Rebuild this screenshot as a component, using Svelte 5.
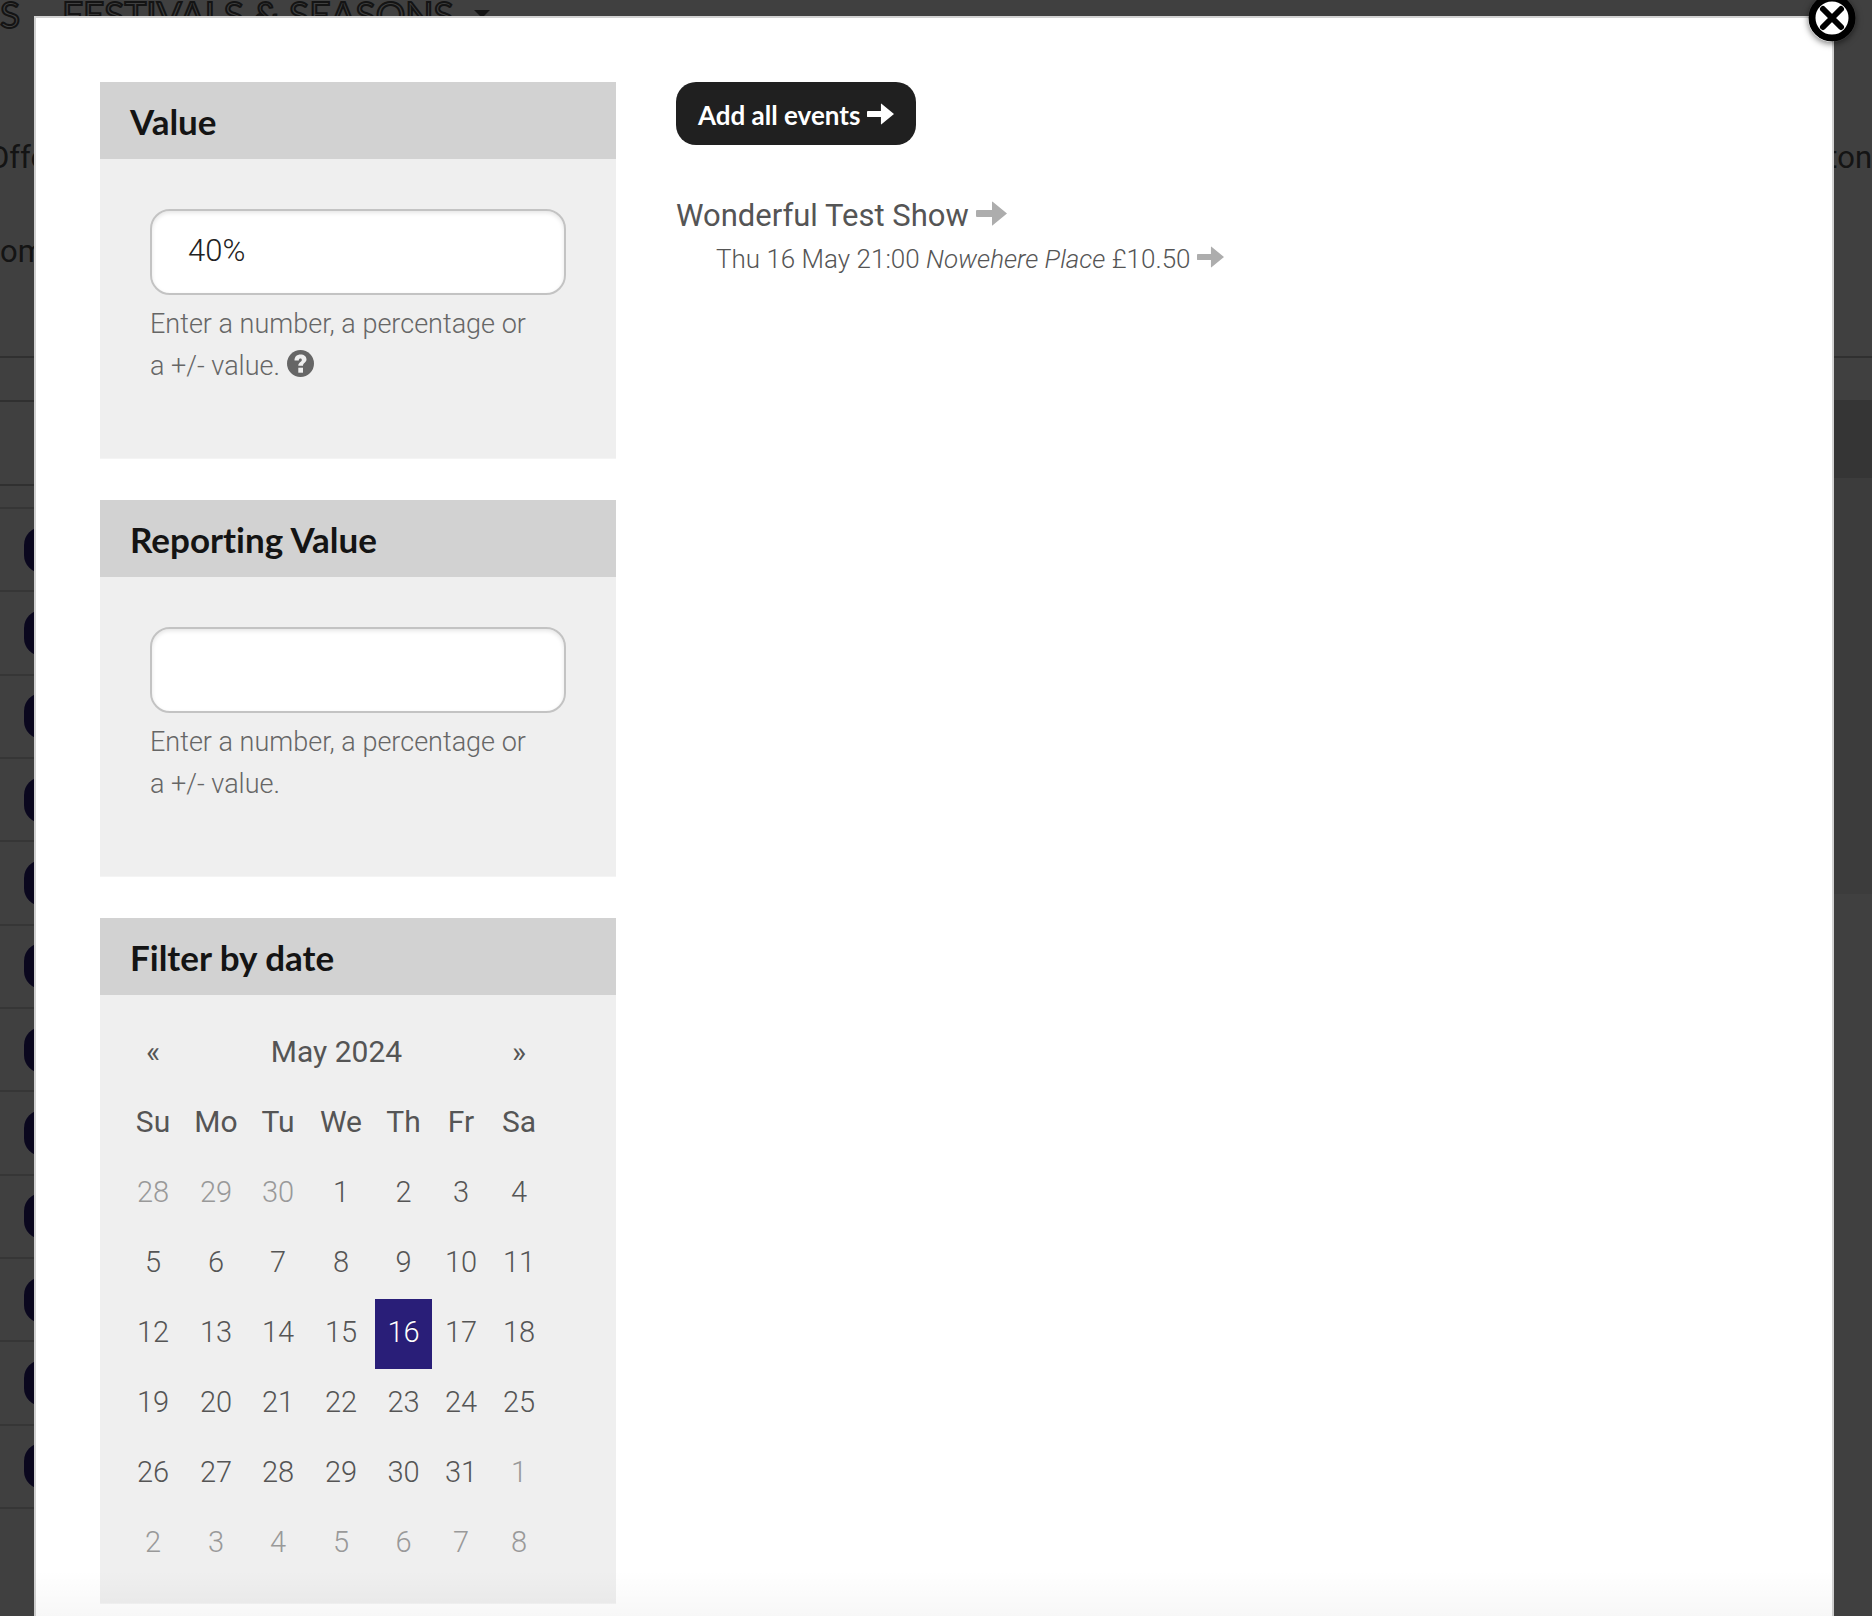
<script lang="ts">
	interface Day {
		date: number;
		other: boolean;
	}

	const DAY_NAMES = ["Su", "Mo", "Tu", "We", "Th", "Fr", "Sa"];
	const MONTHS = [
		"January",
		"February",
		"March",
		"April",
		"May",
		"June",
		"July",
		"August",
		"September",
		"October",
		"November",
		"December",
	];

	const backgroundRows = Array.from({ length: 12 });

	let value = "40%";
	let reportingValue = "";
	let open = true;

	let year = 2024;
	let month = 4;
	let selected = new Date(2024, 4, 16);

	const buildWeeks = (year: number, month: number): Day[][] => {
		const offset = new Date(year, month, 1).getDay();
		return Array.from({ length: 6 }, (_, week) =>
			Array.from({ length: 7 }, (_, day) => {
				const d = new Date(year, month, week * 7 + day - offset + 1);
				return { date: d.getDate(), other: d.getMonth() !== month };
			})
		);
	};

	$: weeks = buildWeeks(year, month);

	const move = (step: number) => {
		const d = new Date(year, month + step, 1);
		year = d.getFullYear();
		month = d.getMonth();
	};

	const isSelected = (day: Day, selected: Date, year: number, month: number) =>
		!day.other &&
		day.date === selected.getDate() &&
		month === selected.getMonth() &&
		year === selected.getFullYear();

	const select = (day: Day) => {
		if (!day.other) {
			selected = new Date(year, month, day.date);
		}
	};
</script>

{#snippet arrow()}
	<svg class="arrow" viewBox="0 0 31 25" aria-hidden="true">
		<path d="M1 9H16V1Q16 0 17 1L31 12.5L17 24Q16 25 16 24V16H1Q0 16 0 15V10Q0 9 1 9Z" />
	</svg>
{/snippet}

<div class="screen">
	<div class="page">
		<nav>
			<span>S</span>
			<span>FESTIVALS &amp; SEASONS</span>
			<svg class="caret" viewBox="0 0 16 8"><path d="M0 0H16L8 8Z" /></svg>
		</nav>
		<div class="intro">
			<span class="bleed">Offe</span>
			<span>ton</span>
		</div>
		<div class="intro second"><span>om</span></div>
		<div class="columns">
			<div class="list">
				<div class="list-head"></div>
				<div class="list-gap"></div>
				<div class="rows">
					{#each backgroundRows as _}
						<div class="row"><span class="pill"></span></div>
					{/each}
				</div>
			</div>
			<aside>
				<div class="aside-head"></div>
				<div class="aside-body"></div>
			</aside>
		</div>
	</div>

	{#if open}
		<div class="overlay">
			<div class="modal" role="dialog" aria-label="Add events">
				<button class="close" aria-label="Close" on:click={() => (open = false)}>
					<svg viewBox="0 0 48 48">
						<circle cx="24" cy="24" r="20" fill="#fff" stroke="#000" stroke-width="7" />
						<path d="M15 15L33 33M33 15L15 33" stroke="#000" stroke-width="6" stroke-linecap="round" />
					</svg>
				</button>

				<div class="sidebar">
					<section class="panel">
						<h3><label for="value">Value</label></h3>
						<div class="panel-body">
							<input id="value" type="text" bind:value />
							<p class="help">
								Enter a number, a percentage or a&nbsp;+/- value.
								<svg class="question" viewBox="0 0 27 27" aria-hidden="true">
									<circle cx="13.5" cy="13.5" r="13.5" fill="#666" />
									<path
										d="M7.5 10.5C7.5 6.5 10 4.5 13.5 4.5C17.2 4.5 19.5 6.5 19.5 9.6C19.5 12.6 16 13 16 15.7H11.3C11.3 12 14.8 12 14.8 9.9C14.8 8 11.8 8 11.8 10.5Z"
										fill="#efefef"
									/>
									<rect x="11.3" y="17.7" width="4.7" height="5" fill="#efefef" />
								</svg>
							</p>
						</div>
					</section>

					<section class="panel">
						<h3><label for="reporting-value">Reporting Value</label></h3>
						<div class="panel-body">
							<input id="reporting-value" type="text" bind:value={reportingValue} />
							<p class="help">Enter a number, a percentage or a&nbsp;+/- value.</p>
						</div>
					</section>

					<section class="panel">
						<h3>Filter by date</h3>
						<div class="calendar">
							<table>
								<colgroup>
									<col class="c-60" />
									<col class="c-66" />
									<col class="c-58" />
									<col class="c-68" />
									<col class="c-57" />
									<col class="c-58" />
									<col class="c-58" />
								</colgroup>
								<thead>
									<tr>
										<th><button aria-label="Previous month" on:click={() => move(-1)}>«</button></th>
										<th colspan="5">{MONTHS[month]} {year}</th>
										<th><button aria-label="Next month" on:click={() => move(1)}>»</button></th>
									</tr>
									<tr>
										{#each DAY_NAMES as name}
											<th>{name}</th>
										{/each}
									</tr>
								</thead>
								<tbody>
									{#each weeks as week}
										<tr>
											{#each week as day}
												<td>
													<button
														class:other={day.other}
														class:active={isSelected(day, selected, year, month)}
														on:click={() => select(day)}
													>
														{day.date}
													</button>
												</td>
											{/each}
										</tr>
									{/each}
								</tbody>
							</table>
						</div>
					</section>
				</div>

				<div class="events">
					<button class="add-all">Add all events {@render arrow()}</button>
					<h4>Wonderful Test Show <a href="#show" aria-label="Add show">{@render arrow()}</a></h4>
					<p class="event">
						Thu 16 May 21:00 <em>Nowehere Place</em> £10.50
						<a href="#event" aria-label="Add event">{@render arrow()}</a>
					</p>
				</div>
			</div>
			<div class="fade"></div>
		</div>
	{/if}
</div>

<style>
	:global(body) {
		margin: 0;
		background: #fff;
	}

	.screen {
		position: relative;
		height: 100vh;
		overflow: hidden;
		font-family: Roboto, "Open Sans", sans-serif;
		font-weight: 300;
		color: #555;
	}

	.screen * {
		box-sizing: border-box;
	}

	button {
		border: 0;
		padding: 0;
		background: none;
		font: inherit;
		color: inherit;
		cursor: pointer;
	}

	nav {
		display: flex;
		align-items: center;
		height: 28px;
		font-family: Lato, sans-serif;
		font-size: 37px;
		font-weight: 400;
		line-height: 28px;
		color: transparent;
		-webkit-text-stroke: 2px #505050;
	}

	nav span + span {
		margin-left: 42px;
	}

	.caret {
		width: 16px;
		height: 8px;
		margin-left: 20px;
		fill: #505050;
	}

	.intro {
		display: flex;
		justify-content: space-between;
		height: 94px;
		margin-top: 110px;
		font-size: 31px;
		font-weight: 400;
		line-height: 40px;
		color: #505050;
	}

	.intro.second {
		height: 124px;
		margin-top: 0;
	}

	.bleed {
		margin-left: -12px;
	}

	.columns {
		display: flex;
		justify-content: space-between;
		border-top: 2px solid #c0c0c0;
	}

	.list {
		width: 60%;
		padding-top: 42px;
	}

	.list-head {
		height: 86px;
		border: solid #c0c0c0;
		border-width: 2px 0;
	}

	.list-gap {
		height: 21px;
	}

	.rows {
		display: grid;
		grid-auto-rows: 1fr;
		height: 1002px;
		border-top: 2px solid #d8d8d8;
	}

	.row {
		display: flex;
		align-items: center;
		padding-left: 24px;
		border-bottom: 2px solid #d8d8d8;
	}

	.pill {
		width: 120px;
		height: 46px;
		border-radius: 18px;
		background: #291e78;
	}

	aside {
		width: 30%;
		padding-top: 42px;
	}

	.aside-head {
		height: 78px;
		background: #d2d2d2;
	}

	.aside-body {
		height: 416px;
		background: #efefef;
	}

	.overlay {
		position: absolute;
		inset: 0;
		padding: 16px 38px 0 34px;
		background: rgba(0, 0, 0, 0.75);
	}

	.modal {
		position: relative;
		display: flex;
		gap: 60px;
		min-height: 100%;
		padding: 64px;
		border: 2px solid #d2d2d2;
		background: #fff;
	}

	.close {
		position: absolute;
		top: -24px;
		right: -24px;
		width: 48px;
		height: 48px;
		border-radius: 50%;
		box-shadow: 0 2px 6px rgba(0, 0, 0, 0.5);
	}

	.close svg {
		display: block;
	}

	.sidebar {
		display: flex;
		flex-direction: column;
		flex: none;
		gap: 41px;
		width: 516px;
	}

	.panel {
		border-bottom: 1px solid #f4f4f4;
		background: #efefef;
		background-clip: padding-box;
	}

	h3 {
		margin: 0;
		padding: 2px 30px 0;
		background: #d2d2d2;
		font-family: Lato, sans-serif;
		font-size: 35px;
		font-weight: 700;
		font-variant-ligatures: none;
		line-height: 75px;
		color: #141414;
	}

	.panel-body {
		padding: 50px 50px 71px;
	}

	input {
		display: block;
		width: 100%;
		height: 86px;
		padding: 0 36px 4px;
		border: 2px solid #c3c3c3;
		border-radius: 20px;
		background: #fff;
		box-shadow: inset 0 2px 4px rgba(0, 0, 0, 0.1);
		font: inherit;
		font-size: 31px;
		color: #222;
	}

	.help {
		margin: 8px 0 0;
		padding-right: 32px;
		font-size: 27px;
		line-height: 42px;
		color: #666;
	}

	.question {
		width: 27px;
		height: 27px;
		vertical-align: -2px;
	}

	.calendar {
		padding: 24px 23px;
	}

	table {
		width: 425px;
		table-layout: fixed;
		border-collapse: collapse;
		font-size: 29px;
		line-height: 60px;
		text-align: center;
	}

	.c-57 {
		width: 57px;
	}

	.c-58 {
		width: 58px;
	}

	.c-60 {
		width: 60px;
	}

	.c-66 {
		width: 66px;
	}

	.c-68 {
		width: 68px;
	}

	th,
	td {
		height: 70px;
		padding: 0;
	}

	th {
		padding-bottom: 4px;
		font-size: 30px;
		font-weight: 400;
	}

	table button {
		display: block;
		width: 100%;
	}

	td button {
		height: 70px;
		padding-bottom: 4px;
	}

	.other {
		color: #999;
	}

	.active {
		background: #291e78;
		color: #fff;
		text-shadow: 0 -1px 0 rgba(0, 0, 0, 0.25);
	}

	.arrow {
		width: 27px;
		height: 22px;
		fill: #adadad;
	}

	.add-all {
		height: 63px;
		padding: 2px 22px 0;
		border-radius: 20px;
		background: #202020;
		font-family: Lato, sans-serif;
		font-size: 26px;
		font-weight: 700;
		color: #fff;
	}

	.add-all .arrow {
		fill: #fff;
	}

	h4 {
		margin: 50px 0 0;
		font-size: 31px;
		font-weight: 400;
		line-height: 42px;
	}

	h4 .arrow {
		width: 31px;
		height: 25px;
	}

	.event {
		margin: 0;
		padding-left: 40px;
		font-size: 26px;
		line-height: 44px;
	}

	.fade {
		position: absolute;
		right: 38px;
		bottom: 0;
		left: 34px;
		height: 46px;
		background: linear-gradient(transparent, rgba(0, 0, 0, 0.03));
		pointer-events: none;
	}
</style>
